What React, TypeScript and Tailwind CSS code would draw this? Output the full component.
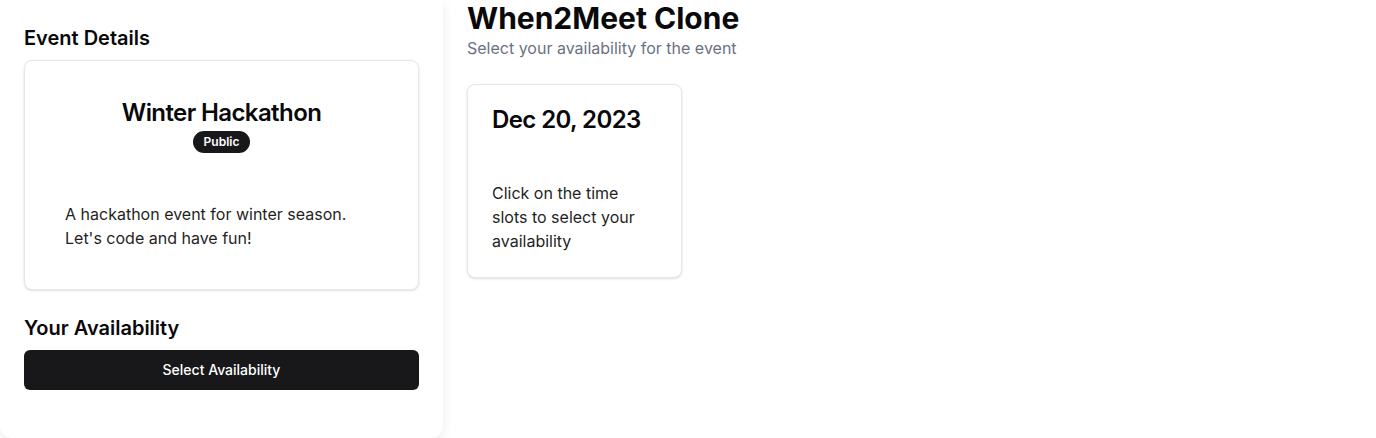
import React from "react";

export default function App() {
  return (
    <div
      className="flex min-h-[438px] w-full bg-white text-[#09090b]"
      style={{ fontFamily: "Inter, 'Noto Sans', sans-serif" }}
    >
      <aside className="flex h-[438px] w-[443px] shrink-0 flex-col rounded-b-xl bg-white px-6 pt-6 shadow-[0_4px_12px_rgba(0,0,0,0.08)]">
        <h2 className="text-xl font-semibold leading-7">Event Details</h2>
        <div className="mt-2 h-[230px] rounded-lg border border-gray-200 bg-white shadow-sm">
          <div className="flex flex-col items-center pt-[36px]">
            <h3 className="text-2xl font-semibold leading-8 tracking-tight">Winter Hackathon</h3>
            <span className="mt-[2px] rounded-full border border-transparent bg-[#18181b] px-2.5 py-0.5 text-xs font-semibold leading-4 text-white">
              Public
            </span>
          </div>
          <div className="px-10 pt-[49px]">
            <p className="text-base leading-6 text-[#1f1f23]">
              A hackathon event for winter season.
              <br />
              Let's code and have fun!
            </p>
          </div>
        </div>
        <h2 className="mt-6 text-xl font-semibold leading-7">Your Availability</h2>
        <button className="mt-2 h-10 w-full rounded-md bg-[#18181b] text-sm font-medium text-white">
          Select Availability
        </button>
      </aside>
      <main className="flex-1 pl-6">
        <h1 className="text-3xl font-bold leading-9">When2Meet Clone</h1>
        <p className="text-base leading-6 text-gray-500">Select your availability for the event</p>
        <div className="mt-6 w-[215px] rounded-lg border border-gray-200 bg-white p-6 shadow-sm">
          <h3 className="-mt-[1px] text-2xl font-semibold leading-6 tracking-tight">Dec 20, 2023</h3>
          <p className="mt-[49px] text-base leading-6 text-[#1f1f23]">
            Click on the time slots to select your availability
          </p>
        </div>
      </main>
    </div>
  );
}
